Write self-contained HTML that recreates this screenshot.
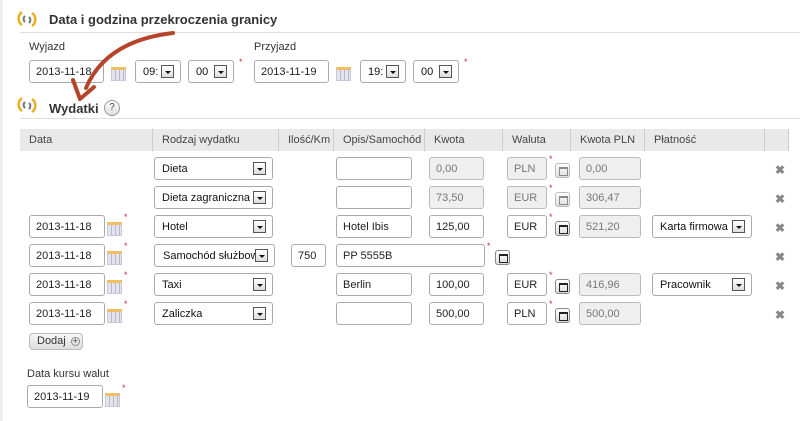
<!DOCTYPE html>
<html><head><meta charset="utf-8"><style>
*{box-sizing:border-box}
body{margin:0;width:800px;height:421px;background:#fff;font-family:"Liberation Sans",Arial,sans-serif;font-size:11px;color:#222;position:relative;overflow:hidden}
.a{position:absolute}
.lb{position:absolute;font-size:11px;color:#333}
.in{position:absolute;height:23px;border:1px solid #aaa;border-radius:3px;background:#fff;padding:0 0 0 6px;line-height:22px;font-size:11px;color:#222}
.in.ro{background:#efefef;color:#777;border-color:#bbb}
.sel{position:absolute;height:23px;border:1px solid #aaa;border-radius:3px;background:#fff;padding-left:7px;line-height:22px;font-size:11px;color:#111;white-space:nowrap;overflow:hidden}
.sel i{position:absolute;right:6px;top:4px;width:13px;height:13px;border:1px solid #555;background:linear-gradient(#fff,#ddd)}
.sel i:after{content:"";position:absolute;left:3px;top:5px;border-left:3px solid transparent;border-right:3px solid transparent;border-top:3px solid #111}
.cal{position:absolute;width:15px;height:14px;border:1px solid #c8c8d8;border-top:3px solid #f0c060;background:repeating-linear-gradient(90deg,#e4e4ee 0 3px,#b8b8cc 3px 4px)}
.st{position:absolute;color:#c33;font-size:9px}
.ic{position:absolute;width:15px;height:15px;border:1px solid #888;border-radius:3px;background:linear-gradient(#fff,#ddd)}
.ic:after{content:"";position:absolute;left:3px;top:3px;width:7px;height:6px;border:1px solid #222;border-top:2px solid #222}
.ic.l{border-color:#bbb}.ic.l:after{border-color:#888}
.x{position:absolute;color:#888;font-size:12px;font-weight:bold}
.th{position:absolute;top:129px;height:22px;background:#e9e9e9;border-right:1px solid #ccc;line-height:22px;padding-left:9px;font-size:11px;color:#444}
.h{position:absolute;font-weight:bold;font-size:13px;color:#333}
</style></head><body>
<div class="a" style="left:0;top:0;width:3px;height:421px;background:#eee"></div>
<svg class="a" style="left:16px;top:9px" width="22" height="20" viewBox="0 0 22 20"><path d="M6 3 A8 8 0 0 0 6 16" stroke="#e8b020" stroke-width="2.5" fill="none"/><path d="M16 4 A8 8 0 0 1 16 17" stroke="#e8b020" stroke-width="2.5" fill="none"/><path d="M9 7 A4 4 0 0 0 9 13" stroke="#777" stroke-width="2" fill="none"/><path d="M13 8 A4 4 0 0 1 13 14" stroke="#777" stroke-width="2" fill="none"/></svg>
<div class="h" style="left:49px;top:12px">Data i godzina przekroczenia granicy</div>
<div class="a" style="left:20px;top:32px;width:780px;height:1px;background:#ddd"></div>
<div class="lb" style="left:29px;top:41px">Wyjazd</div>
<div class="lb" style="left:254px;top:41px">Przyjazd</div>
<div class="in" style="left:29px;top:60px;width:75px">2013-11-18</div>
<div class="cal" style="left:111px;top:67px"></div>
<div class="sel" style="left:135px;top:60px;width:46px">09:<i></i></div>
<div class="sel" style="left:188px;top:60px;width:46px">00<i></i></div>
<div class="st" style="left:239px;top:57px">*</div>
<div class="in" style="left:254px;top:60px;width:75px">2013-11-19</div>
<div class="cal" style="left:336px;top:67px"></div>
<div class="sel" style="left:360px;top:60px;width:46px">19:<i></i></div>
<div class="sel" style="left:413px;top:60px;width:46px">00<i></i></div>
<div class="st" style="left:464px;top:57px">*</div>
<svg class="a" style="left:16px;top:95px" width="22" height="20" viewBox="0 0 22 20"><path d="M6 3 A8 8 0 0 0 6 16" stroke="#e8b020" stroke-width="2.5" fill="none"/><path d="M16 4 A8 8 0 0 1 16 17" stroke="#e8b020" stroke-width="2.5" fill="none"/><path d="M9 7 A4 4 0 0 0 9 13" stroke="#777" stroke-width="2" fill="none"/><path d="M13 8 A4 4 0 0 1 13 14" stroke="#777" stroke-width="2" fill="none"/></svg>
<div class="h" style="left:49px;top:101px;font-size:13px">Wydatki</div>
<div class="a" style="left:104px;top:100px;width:16px;height:16px;border:1px solid #999;border-radius:50%;background:linear-gradient(#fff,#ddd);font-size:10px;text-align:center;line-height:14px;color:#444">?</div>
<div class="a" style="left:20px;top:118px;width:780px;height:1px;background:#ddd"></div>
<svg class="a" style="left:0;top:0" width="200" height="110"><path d="M173 33 C130 38 100 55 86 88" stroke="#b5452a" stroke-width="4" fill="none" stroke-linecap="round"/><path d="M73 80 L80 99 L94 87" stroke="#b5452a" stroke-width="4" fill="none" stroke-linecap="round" stroke-linejoin="round"/></svg>
<div class="th" style="left:20px;width:133px">Data</div>
<div class="th" style="left:153px;width:126px">Rodzaj wydatku</div>
<div class="th" style="left:279px;width:55px">Ilość/Km</div>
<div class="th" style="left:334px;width:91px">Opis/Samochód</div>
<div class="th" style="left:425px;width:78px">Kwota</div>
<div class="th" style="left:503px;width:68px">Waluta</div>
<div class="th" style="left:571px;width:74px">Kwota PLN</div>
<div class="th" style="left:645px;width:120px">Płatność</div>
<div class="th" style="left:765px;width:24px"></div>

<div class="sel" style="left:154px;top:157px;width:119px">Dieta<i></i></div>
<div class="in" style="left:336px;top:157px;width:76px"></div>
<div class="in ro" style="left:429px;top:157px;width:55px">0,00</div>
<div class="in ro" style="left:507px;top:157px;width:40px">PLN</div><div class="st" style="left:549px;top:154px">*</div><div class="ic l" style="left:555px;top:163px"></div>
<div class="in ro" style="left:579px;top:157px;width:62px">0,00</div>
<div class="x" style="left:775px;top:163px">✖</div>

<div class="sel" style="left:154px;top:186px;width:119px">Dieta zagraniczna<i></i></div>
<div class="in" style="left:336px;top:186px;width:76px"></div>
<div class="in ro" style="left:429px;top:186px;width:55px">73,50</div>
<div class="in ro" style="left:507px;top:186px;width:40px">EUR</div><div class="st" style="left:549px;top:183px">*</div><div class="ic l" style="left:555px;top:192px"></div>
<div class="in ro" style="left:579px;top:186px;width:62px">306,47</div>
<div class="x" style="left:775px;top:192px">✖</div>

<div class="in" style="left:29px;top:215px;width:76px">2013-11-18</div><div class="cal" style="left:107px;top:222px"></div><div class="st" style="left:124px;top:212px">*</div>
<div class="sel" style="left:154px;top:215px;width:119px">Hotel<i></i></div>
<div class="in" style="left:336px;top:215px;width:76px">Hotel Ibis</div>
<div class="in" style="left:429px;top:215px;width:55px">125,00</div>
<div class="in" style="left:507px;top:215px;width:40px">EUR</div><div class="st" style="left:549px;top:212px">*</div><div class="ic" style="left:555px;top:221px"></div>
<div class="in ro" style="left:579px;top:215px;width:62px">521,20</div>
<div class="sel" style="left:652px;top:215px;width:100px">Karta firmowa<i></i></div>
<div class="x" style="left:775px;top:221px">✖</div>

<div class="in" style="left:29px;top:244px;width:76px">2013-11-18</div><div class="cal" style="left:107px;top:251px"></div><div class="st" style="left:124px;top:241px">*</div>
<div class="sel" style="left:154px;top:244px;width:121px;padding-left:8px">Samochód służbowy<i></i></div>
<div class="in" style="left:291px;top:244px;width:35px">750</div>
<div class="in" style="left:336px;top:244px;width:149px">PP 5555B</div><div class="st" style="left:487px;top:241px">*</div><div class="ic" style="left:495px;top:250px"></div>
<div class="x" style="left:775px;top:250px">✖</div>

<div class="in" style="left:29px;top:273px;width:76px">2013-11-18</div><div class="cal" style="left:107px;top:280px"></div><div class="st" style="left:124px;top:270px">*</div>
<div class="sel" style="left:154px;top:273px;width:119px">Taxi<i></i></div>
<div class="in" style="left:336px;top:273px;width:76px">Berlin</div>
<div class="in" style="left:429px;top:273px;width:55px">100,00</div>
<div class="in" style="left:507px;top:273px;width:40px">EUR</div><div class="st" style="left:549px;top:270px">*</div><div class="ic" style="left:555px;top:279px"></div>
<div class="in ro" style="left:579px;top:273px;width:62px">416,96</div>
<div class="sel" style="left:652px;top:273px;width:100px">Pracownik<i></i></div>
<div class="x" style="left:775px;top:279px">✖</div>

<div class="in" style="left:29px;top:302px;width:76px">2013-11-18</div><div class="cal" style="left:107px;top:309px"></div><div class="st" style="left:124px;top:299px">*</div>
<div class="sel" style="left:154px;top:302px;width:119px">Zaliczka<i></i></div>
<div class="in" style="left:336px;top:302px;width:76px"></div>
<div class="in" style="left:429px;top:302px;width:55px">500,00</div>
<div class="in" style="left:507px;top:302px;width:40px">PLN</div><div class="st" style="left:549px;top:299px">*</div><div class="ic" style="left:555px;top:308px"></div>
<div class="in ro" style="left:579px;top:302px;width:62px">500,00</div>
<div class="x" style="left:775px;top:308px">✖</div>

<div class="a" style="left:29px;top:333px;width:54px;height:17px;border:1px solid #bbb;border-radius:4px;background:linear-gradient(#f8f8f8,#ddd);font-size:11px;line-height:15px;padding-left:7px;color:#333">Dodaj <span style="font-size:9px;border:1px solid #888;border-radius:50%;display:inline-block;width:9px;height:9px;line-height:7px;text-align:center;margin-left:2px">+</span></div>
<div class="lb" style="left:27px;top:368px">Data kursu walut</div>
<div class="in" style="left:27px;top:385px;width:76px">2013-11-19</div><div class="cal" style="left:105px;top:393px"></div><div class="st" style="left:122px;top:383px">*</div>
</body></html>
